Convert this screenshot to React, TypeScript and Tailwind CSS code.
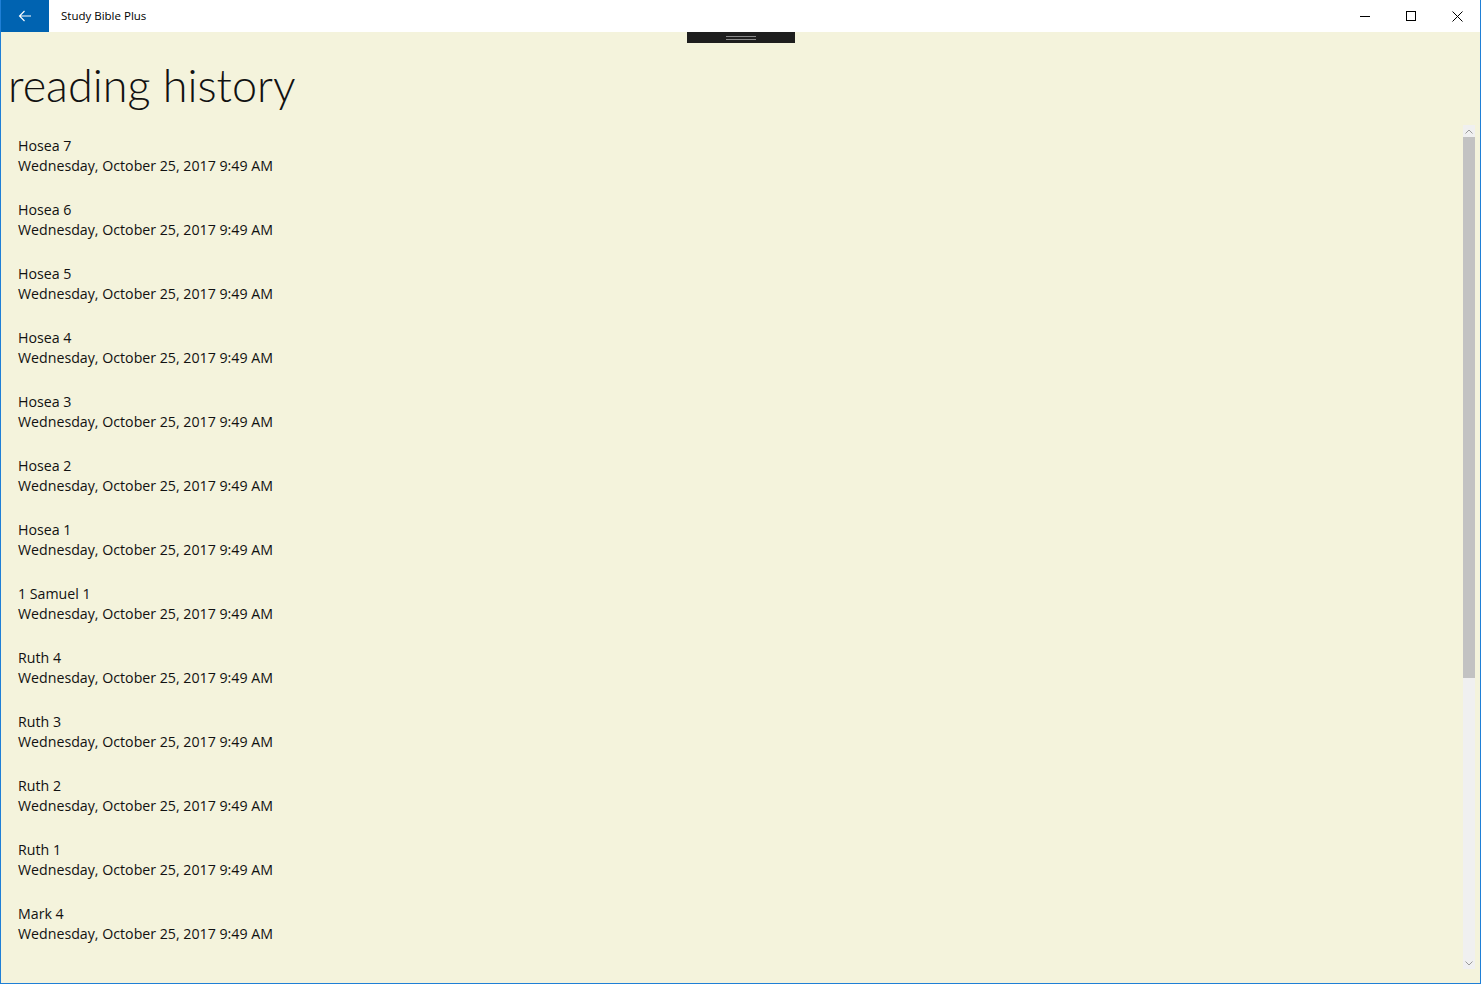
import React from 'react'

const history = [
  'Hosea 7',
  'Hosea 6',
  'Hosea 5',
  'Hosea 4',
  'Hosea 3',
  'Hosea 2',
  'Hosea 1',
  '1 Samuel 1',
  'Ruth 4',
  'Ruth 3',
  'Ruth 2',
  'Ruth 1',
  'Mark 4',
]

const App = () => {
  return (
    <div className="w-[1481px] h-[984px] flex flex-col border border-t-0 border-[#1f7fd6] bg-[#f4f3dc] overflow-hidden font-['Open_Sans',sans-serif] text-[#111]">
      {/* title bar */}
      <div className="h-[32px] flex items-center bg-white shrink-0">
        <div className="w-[48px] h-[32px] bg-[#0063b1] flex items-center justify-center">
          <svg width="16" height="16" viewBox="0 0 16 16" fill="none" stroke="white" strokeWidth="1.1">
            <path d="M14 8H2.5M7.5 3L2.5 8l5 5" />
          </svg>
        </div>
        <div className="ml-[12px] text-[11.5px] text-black">Study Bible Plus</div>
        <div className="ml-auto flex h-full">
          <div className="w-[46px] flex items-center justify-center">
            <div className="w-[10px] h-px bg-black"></div>
          </div>
          <div className="w-[46px] flex items-center justify-center">
            <div className="w-[10px] h-[10px] border border-black"></div>
          </div>
          <div className="w-[46px] flex items-center justify-center">
            <svg width="11" height="11" viewBox="0 0 11 11" stroke="black" strokeWidth="1">
              <path d="M0.5 0.5l10 10M10.5 0.5l-10 10" />
            </svg>
          </div>
        </div>
      </div>

      <div className="flex-1 flex flex-col relative min-h-0">
        {/* drag handle */}
        <div className="absolute left-[686px] top-0 w-[108px] h-[11px] bg-[#1e1e1e] flex flex-col items-center justify-center gap-[2px]">
          <div className="w-[30px] h-px bg-[#8a8a8a]"></div>
          <div className="w-[30px] h-px bg-[#8a8a8a]"></div>
        </div>

        <h1 className="pl-[7px] pt-[23px] text-[45px] leading-[60px] font-light font-['Lato',sans-serif] text-[#111]">reading history</h1>

        <div className="flex flex-1 min-h-0 mt-[7px]">
          <div className="flex-1 overflow-hidden pl-[17px] pt-[14px]">
            {history.map(item => (
              <div key={item} className="h-[64px] text-[14.2px] leading-[20px]">
                <div>{item}</div>
                <div>Wednesday, October 25, 2017 9:49 AM</div>
              </div>
            ))}
          </div>
          <div className="w-[12px] mr-[5px] mt-[3px] mb-[14px] bg-[#f0f0f0] flex flex-col items-center">
            <div className="h-[12px] flex items-center justify-center">
              <svg width="8" height="5" viewBox="0 0 8 5" fill="none" stroke="#9a9a9a" strokeWidth="1">
                <path d="M0.5 4.5L4 1l3.5 3.5" />
              </svg>
            </div>
            <div className="w-full h-[541px] bg-[#c2c2c2]"></div>
            <div className="mt-auto h-[12px] flex items-center justify-center">
              <svg width="8" height="5" viewBox="0 0 8 5" fill="none" stroke="#9a9a9a" strokeWidth="1">
                <path d="M0.5 0.5L4 4l3.5-3.5" />
              </svg>
            </div>
          </div>
        </div>
      </div>
    </div>
  )
}

export default App
